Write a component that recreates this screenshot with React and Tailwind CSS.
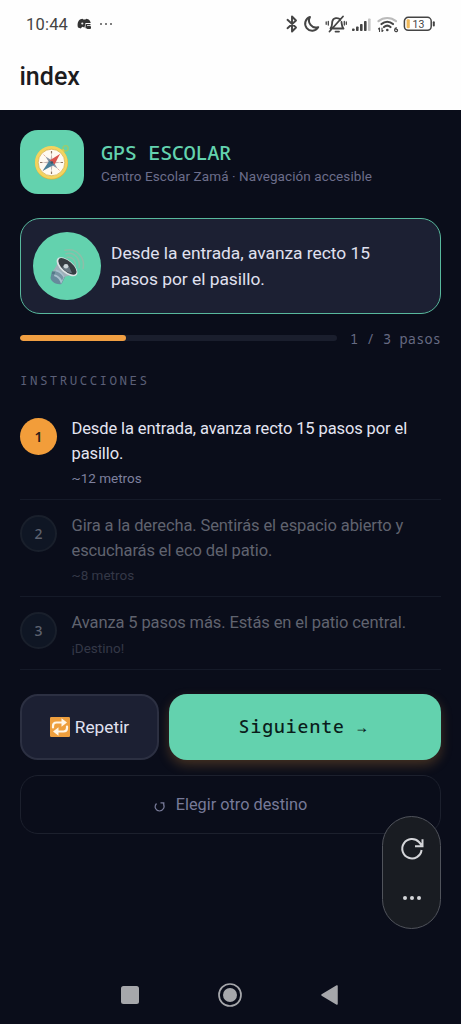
import React from "react";

const steps = [
  { n: 1, lines: ["Desde la entrada, avanza recto 15 pasos por el", "pasillo."], note: "~12 metros", active: true },
  { n: 2, lines: ["Gira a la derecha. Sentirás el espacio abierto y", "escucharás el eco del patio."], note: "~8 metros" },
  { n: 3, lines: ["Avanza 5 pasos más. Estás en el patio central."], note: "¡Destino!" },
];

function StatusIcons() {
  return (
    <svg width="154" height="24" viewBox="0 0 154 24" fill="none" stroke="#444" strokeWidth="1.7" strokeLinecap="round" strokeLinejoin="round">
      <path d="M2.500 7.800l8.500 7.700-4 4V4.500l4 4-8.500 7.700" strokeWidth="1.900" />
      <path d="M25 5a7 7 0 1 0 8.200 10.200a7 7 0 0 1-8.200-10.200z" strokeWidth="2" />
      <g strokeWidth="1.800">
        <path d="M45.500 16.500c2-2 1.300-4.500 1.800-7c.8-3.800 6-4.500 8-1.500M56.500 10c.4 3 .1 4.500 2 6.500H48.500M50.500 19.600h3.500M44.500 19.500L58 4.500" />
        <path d="M43.300 9.500v3.500M41.200 10v2.300M59.300 9.500v3.500M61.300 10v2.300" strokeWidth="1.300" />
      </g>
      <g stroke="none" fill="#444">
        <rect x="67" y="16.500" width="2.600" height="2.500" rx=".8" />
        <rect x="71" y="14.500" width="2.600" height="4.500" rx=".8" />
        <rect x="75" y="12" width="2.600" height="7" rx=".8" />
        <rect x="79" y="9" width="2.600" height="10" rx=".8" />
        <rect x="83" y="6.500" width="2.600" height="12.500" rx=".8" fill="#c4c4c4" />
      </g>
      <path d="M93.500 9.200c5-4.300 12.500-4.300 17.500 0" stroke="#bbb" strokeWidth="2.200" />
      <path d="M96.500 12c3.500-3 8-3 11.500 0M99 15c2-1.700 4.500-1.700 6.500 0" strokeWidth="2.200" />
      <circle cx="102.300" cy="18" r="1.300" fill="#444" stroke="none" />
      <path d="M94.500 19.500v-3.500l-1 1M97 16v3.500l1-1" strokeWidth="1.100" />
      <path d="M111.500 15.800c-2.300 0-2.500 3.800-.5 3.800c2.100 0 2-2.600 0-2.500" strokeWidth="1.200" />
      <rect x="119.400" y="5.300" width="26.800" height="13" rx="3.800" strokeWidth="1.500" />
      <path d="M148.800 10.200v3.200" strokeWidth="2" />
      <rect x="121.600" y="7.300" width="3.200" height="9" rx="1" fill="#f0b95a" stroke="none" />
      <text x="127.500" y="15.600" fontFamily="Roboto, sans-serif" fontSize="10.500" fill="#444" stroke="none">13</text>
    </svg>
  );
}

function Compass() {
  return (
    <svg width="36" height="36" viewBox="0 0 36 36">
      <circle cx="31.500" cy="4.300" r="2.700" fill="none" stroke="#9ccb6c" strokeWidth="1.300" />
      <path d="M25 6l5-1 .5 3-2 3z" fill="#d0cc58" />
      <circle cx="17.500" cy="19" r="16.600" fill="#dfb23c" />
      <circle cx="17.300" cy="18.400" r="16.300" fill="#f3d45f" />
      <circle cx="17.500" cy="18.500" r="13.300" fill="#fffaf1" stroke="#d3a943" strokeWidth=".7" />
      <path d="M17.500 7v2.500M17.500 27.500V30M6 18.500h2.500M26.500 18.500H29" stroke="#8e7460" strokeWidth="1.200" />
      <path d="M9.500 10.500l2 2M23.500 24.500l2 2M9.500 26.500l2-2M23.500 12.500l2-2" stroke="#e6b0a4" />
      <path d="M17.500 9l1.200 8.300L27 18.500l-8.300 1.200-1.200 8.300-1.200-8.300L8 18.500l8.300-1.200z" fill="#c3b3b3" />
      <path d="M11.500 12.500l7.500 4.500-3 3zM23.500 24.500l-4.500-7.500-3 3z" fill="#8a94a4" />
      <path d="M26 10l-5.500 10.500-5-4z" fill="#d9534d" />
      <path d="M8.500 27l7-10.500 5 4z" fill="#4b8099" />
      <circle cx="17.800" cy="18.500" r="1.300" fill="#395769" />
    </svg>
  );
}

function Speaker() {
  return (
    <svg width="38" height="38" viewBox="0 0 38 38">
      <g fill="none" stroke="#8cbfa9" strokeWidth="1.500" strokeLinecap="round">
        <path d="M19 10.500c5-1.500 9.500 3.500 8 9" /><path d="M18 6.800c8-2.300 15 5 13 13.700" /><path d="M17 3.300c11-3 20.500 6.700 18 18.200" />
      </g>
      <path d="M4 24L2.500 31c1 4 6 7 11 6l4-8z" fill="#66899b" />
      <path d="M10 12c0 5-2.500 9-5.500 12.500 5 0 9 2.500 11 6 4-2 8-2.500 12-2.500z" fill="#9fb0b9" />
      <path d="M8 22.500c4 1 7 4 8.500 7.500l-3.500 7c-1-4-3-6.500-7-8z" fill="#a8c1ce" />
      <path d="M4.500 24.500c4-1 9 2 11 6l-1.500 3c-2-4-6-6.500-10.200-6.500z" fill="#46697a" opacity=".5" />
      <ellipse cx="19" cy="19.800" rx="12.600" ry="6.300" transform="rotate(41 19 19.800)" fill="#dce3e5" />
      <ellipse cx="19.400" cy="19.400" rx="11.200" ry="5.100" transform="rotate(41 19.400 19.400)" fill="#363d42" />
      <path d="M14.500 21c0-4 5-5 6.500-1.500l3 6.500c-4 0-7-2-9.500-5z" fill="#687780" />
      <circle cx="18" cy="19.300" r="2.300" fill="#cbd5d8" />
    </svg>
  );
}

function RepeatEmoji() {
  return (
    <svg width="20" height="20" viewBox="0 0 20 20">
      <rect width="20" height="20" rx="1.200" fill="#ee9f3e" />
      <g fill="none" stroke="#fff5e5" strokeWidth="2.200" strokeLinecap="round">
        <path d="M3 10.500V9c0-2.800 1.500-3.500 3.500-3.500h6M17 9.500V11c0 2.800-1.500 3.500-3.500 3.500h-6" />
      </g>
      <path d="M11.500 1.300l5.500 4.200-5.500 4.200zM8.500 10.300L3 14.500l5.500 4.200z" fill="#fff5e5" />
    </svg>
  );
}

function Step({ n, lines, note, active }) {
  return (
    <li className="flex gap-[15px] border-b border-[#151a28] pt-[14px] pb-[11px]">
      <span className={active
        ? "mt-[1px] flex size-[37px] shrink-0 items-center justify-center rounded-full bg-[#f29d3a] font-['Noto_Sans'] text-[14px] font-semibold text-[#2b2018]"
        : "mt-[1px] flex size-[37px] shrink-0 items-center justify-center rounded-full border-2 border-[#191f2b] bg-[#0f1624] font-['Noto_Sans'] text-[14px] font-medium text-[#5d626f]"}>
        {n}
      </span>
      <div className="-ml-[0.500px] whitespace-nowrap">
        {lines.map((line) => (
          <p key={line} className={active ? "text-[16.500px] leading-[24.500px] tracking-[-0.110px] text-[#e4e5f2]" : "text-[16.500px] leading-[24.500px] tracking-[-0.110px] text-[#60636f]"}>{line}</p>
        ))}
        <p className={active ? "mt-[3px] mb-[1px] text-[13.500px] leading-[18px] text-[#7e809e]" : "mt-[3px] mb-[1px] text-[13.500px] leading-[18px] text-[#343847]"}>{note}</p>
      </div>
    </li>
  );
}

export default function App() {
  return (
    <div className="relative flex h-[1024px] w-[461px] flex-col overflow-hidden bg-[#0a0d1a] font-[Roboto,sans-serif]">
      <header className="h-[110px] shrink-0 bg-[#fefefe]">
        <div className="flex h-12 items-center pl-[26px] pr-[22px]">
          <span className="pt-[2px] text-[16.500px] tracking-[0.200px] text-[#444]">10:44</span>
          <svg className="ml-[9px]" width="15" height="12" viewBox="0 0 15 12" fill="#333">
            <path d="M1 9.500C0 6 1 2.500 3.500 1.200L5.500.8l.8.700h2L9.500.8l2.200.6c1 .8 1.800 2 2 3.600H8.500L7.500 9.500 5.200 8.800 3.800 10.500z" />
            <circle cx="5.300" cy="5.500" r="1.100" fill="#eee" /><path d="M9 6h4.500v1.200H10v3H8.500V6.500z" /><rect x="9.500" y="8" width="4.500" height="3" rx="1" />
          </svg>
          <span className="ml-[8px] flex gap-[3px]"><i className="size-[2px] rounded-full bg-[#555]" /><i className="size-[2px] rounded-full bg-[#555]" /><i className="size-[2px] rounded-full bg-[#555]" /></span>
          <div className="ml-auto"><StatusIcons /></div>
        </div>
        <h1 className="pl-[19.500px] text-[25px] font-medium leading-[58px] text-[#1c1c1e]">index</h1>
      </header>

      <main className="flex flex-col px-5 pt-5">
        <section className="flex h-16 items-center gap-[17px]">
          <div className="flex size-16 items-center justify-center rounded-[18px] bg-[#63d2ae]"><Compass /></div>
          <div className="whitespace-nowrap pt-[2px]">
            <h2 className="font-['Noto_Sans_Mono','DejaVu_Sans_Mono',monospace] text-[20.500px] font-medium leading-[26px] tracking-[-0.500px] text-[#63d2ae]">GPS ESCOLAR</h2>
            <p className="mt-[1px] text-[13.500px] leading-[21px] tracking-[0.090px] text-[#6c6e8b]">Centro Escolar Zamá · Navegación accesible</p>
          </div>
        </section>

        <section className="mt-[24px] flex h-[96px] items-center gap-[10px] rounded-[20px] border-[1.5px] border-[#58b89d] bg-[#1c2033] pl-[12px]">
          <div className="flex size-[68px] items-center justify-center rounded-full bg-[#63d2ae]"><Speaker /></div>
          <p className="whitespace-nowrap text-[17.400px] leading-[26px] tracking-[-0.030px] text-[#e0e1f0]">Desde la entrada, avanza recto 15<br />pasos por el pasillo.</p>
        </section>

        <div className="mt-[14px] flex h-5 items-center gap-[13px]">
          <div className="h-[6px] flex-1 overflow-hidden rounded-full bg-[#1a1e2d]"><div className="h-full w-1/3 rounded-full bg-[#f09e42]" /></div>
          <span className="whitespace-nowrap pt-[2px] font-['Noto_Sans_Mono','DejaVu_Sans_Mono',monospace] text-[13.500px] tracking-[0.180px] text-[#666a82]">1 / 3 pasos</span>
        </div>

        <h3 className="mt-[22px] font-['Noto_Sans_Mono','DejaVu_Sans_Mono',monospace] text-[12.500px] leading-[21px] tracking-[2.450px] text-[#5c6078]">INSTRUCCIONES</h3>
        <ol className="mt-[12px]">{steps.map((step) => <Step key={step.n} {...step} />)}</ol>

        <div className="mt-[24.500px] flex h-[66px] gap-[10px]">
          <button className="flex w-[139px] items-center justify-center gap-[5px] rounded-[18px] border-2 border-[#2c3042] bg-[#1c2033] text-[17.300px] text-[#e0e1f0]"><RepeatEmoji /><span className="pt-[2px]">Repetir</span></button>
          <button className="flex-1 whitespace-pre rounded-[18px] bg-[#63d2ae] pr-[3px] pb-[2px] font-['Noto_Sans_Mono','DejaVu_Sans_Mono',monospace] text-[18px] font-medium tracking-[1px] text-[#0a1d1b] shadow-[0_5px_12px_#f19d3a40]">Siguiente <span className="font-semibold">→</span></button>
        </div>
        <button className="mt-[15px] flex h-[59px] items-center justify-center gap-[10px] rounded-[18px] border-[1.5px] border-[#1c202d] pt-[2px] text-[16.300px] text-[#777a98]">
          <svg width="12" height="14" viewBox="0 0 12 14" fill="none" stroke="#777a98" strokeWidth="1.200"><path d="M2.500 4.500C-.5 8 2 12 5.500 12S11.500 8 9.200 4.500M6.500 3.800h3.300v3.500" /></svg>
          Elegir otro destino
        </button>
      </main>

      <div className="absolute left-[382px] top-[816px] flex h-[113px] w-[59px] flex-col items-center rounded-full border-[1.5px] border-[#50535b] bg-[#191c22]">
        <svg className="mt-[19px]" width="26" height="26" viewBox="0 0 26 26" fill="none" stroke="#d4d5d9" strokeWidth="2"><path d="M22.600 14A9.700 9.700 0 1 1 20 6L22.500 9M23.500 3.200v7h-7.500" /></svg>
        <div className="mt-[33.500px] flex gap-[3px]"><i className="size-[4px] rounded-full bg-[#d4d5d9]" /><i className="size-[4px] rounded-full bg-[#d4d5d9]" /><i className="size-[4px] rounded-full bg-[#d4d5d9]" /></div>
      </div>

      <nav className="mt-auto flex h-[58px] items-center justify-center gap-[76px] pr-[1px]">
        <svg width="24" height="24" viewBox="0 0 24 24"><rect x="3" y="3" width="18" height="18" rx="2.500" fill="#a6a7ab" /></svg>
        <svg width="24" height="24" viewBox="0 0 24 24"><circle cx="12" cy="12" r="11" fill="none" stroke="#a6a7ab" strokeWidth="1.700" /><circle cx="12" cy="12" r="7" fill="#a6a7ab" /></svg>
        <svg width="24" height="24" viewBox="0 0 24 24"><path d="M4 12L19 3v18z" fill="#a6a7ab" stroke="#a6a7ab" strokeWidth="1.500" strokeLinejoin="round" /></svg>
      </nav>
    </div>
  );
}
